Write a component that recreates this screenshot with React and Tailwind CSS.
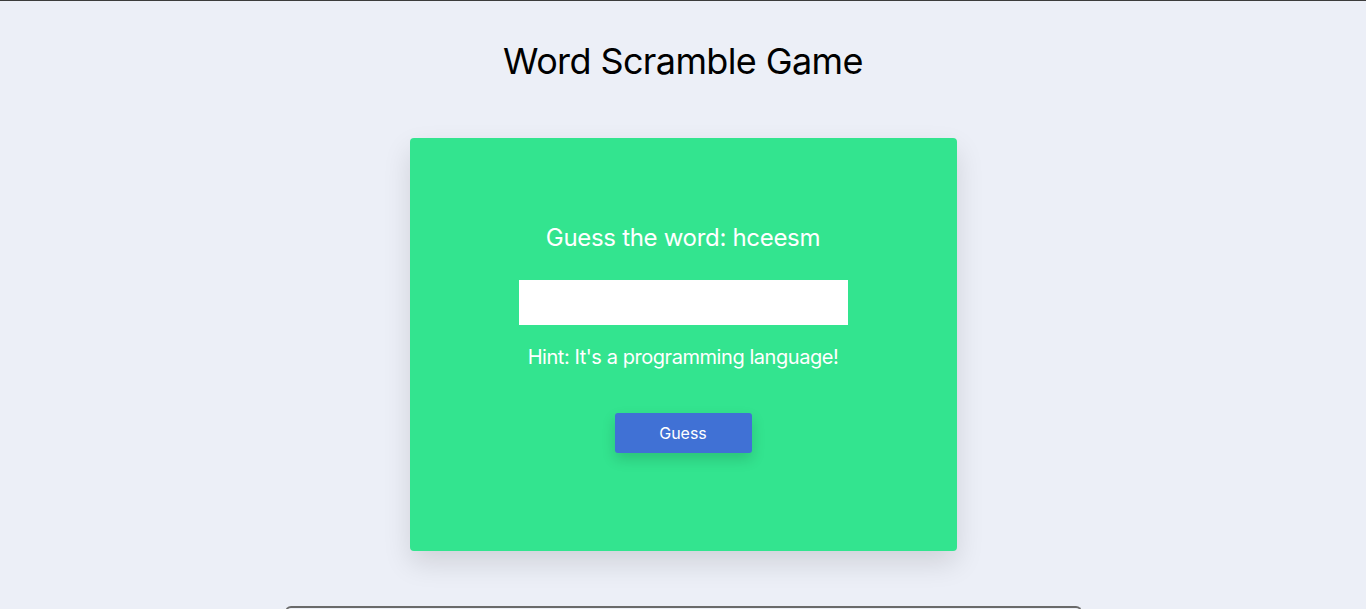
export default function App() {
  return (
    <div className="min-h-screen border-t border-[#3c3c3c] bg-[#eceff7] font-['Inter',sans-serif] overflow-hidden">
      <h1 className="pt-[38px] text-center text-[36px] leading-[44px] tracking-[-0.017em] text-black">Word Scramble Game</h1>
      <div className="mt-[55px] flex justify-center">
        <div className="flex h-[413px] w-[547px] flex-col items-center rounded bg-[#33e48f] pt-[84px] shadow-[0_12px_28px_rgba(0,0,0,0.12)]">
          <h2 className="text-[24px] leading-[32px] tracking-[-0.013em] text-white">Guess the word: hceesm</h2>
          <input type="text" className="mt-[26px] h-[45px] w-[329px] bg-white outline-none" />
          <p className="mt-[18px] text-[20px] leading-[28px] tracking-[-0.022em] text-white">Hint: It's a programming language!</p>
          <button className="mt-[42px] h-[40px] w-[137px] rounded-[3px] bg-[#4071d5] text-[16px] text-white shadow-[0_6px_14px_rgba(0,0,0,0.15)]">
            Guess
          </button>
        </div>
      </div>
      <div className="mt-[55px] flex justify-center">
        <div className="h-[20px] w-[797px] rounded-t-md border-x-2 border-t-2 border-[#6a6a6a] bg-[#eceff7]" />
      </div>
    </div>
  );
}
